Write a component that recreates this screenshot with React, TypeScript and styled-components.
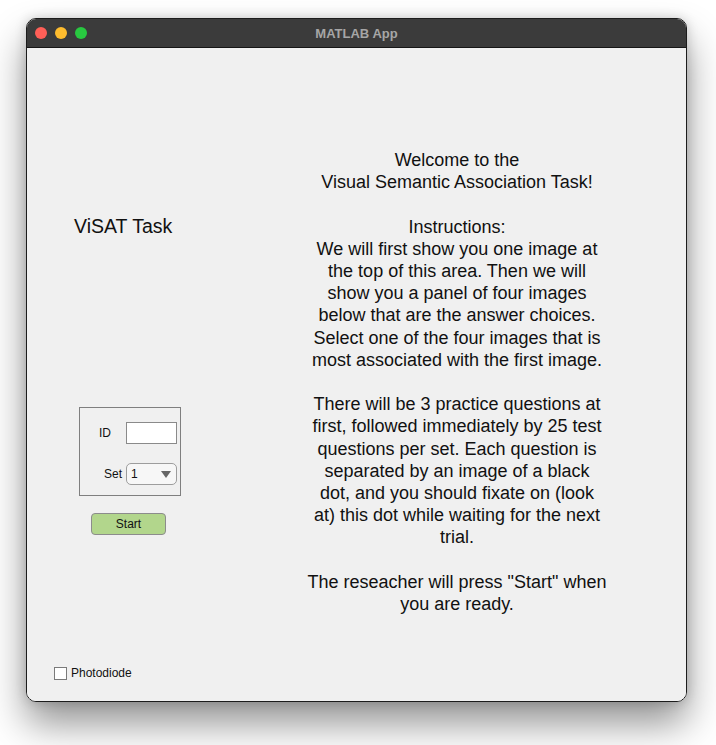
import React, { useState } from 'react';
import styled, { createGlobalStyle } from 'styled-components';

const GlobalStyle = createGlobalStyle`
  html, body {
    margin: 0;
    padding: 0;
    background: #ffffff;
    font-family: 'Liberation Sans', Arial, Helvetica, sans-serif;
  }
`;

const Desktop = styled.div`
  width: 716px;
  height: 745px;
  padding: 18px 0 0 26px;
  box-sizing: border-box;
  overflow: hidden;
`;

const Window = styled.div`
  width: 661px;
  height: 684px;
  border-radius: 10px;
  overflow: hidden;
  border: 1px solid #1c1c1c;
  box-sizing: border-box;
  display: flex;
  flex-direction: column;
  box-shadow: 0 22px 38px rgba(0, 0, 0, 0.42), 0 0 12px rgba(0, 0, 0, 0.18);
`;

const TitleBar = styled.div`
  height: 28px;
  flex-shrink: 0;
  background: #3b3b3b;
  border-bottom: 1px solid #161616;
  display: flex;
  align-items: center;
  position: relative;
  padding-left: 8px;
  gap: 8px;
`;

const Light = styled.span<{ $color: string }>`
  width: 12px;
  height: 12px;
  border-radius: 50%;
  background: ${(p) => p.$color};
`;

const WindowTitle = styled.div`
  position: absolute;
  left: 0;
  right: 0;
  text-align: center;
  font-size: 13px;
  font-weight: bold;
  color: #a6a6a6;
  pointer-events: none;
`;

const Content = styled.div`
  flex: 1;
  background: #f0f0f0;
  display: grid;
  grid-template-columns: 270px 320px;
`;

const LeftColumn = styled.div`
  display: flex;
  flex-direction: column;
  align-items: flex-start;
`;

const AppTitle = styled.div`
  margin: 166px 0 0 47px;
  font-size: 19.5px;
  line-height: 24px;
  color: #111;
`;

const Panel = styled.div`
  margin: 169px 0 0 52px;
  width: 102px;
  height: 89px;
  box-sizing: border-box;
  border: 1px solid #7f7f7f;
  padding: 14px 3px 0 0;
  display: grid;
  grid-template-columns: 1fr 51px;
  grid-auto-rows: 22px;
  column-gap: 4px;
  row-gap: 19px;
  align-items: center;
`;

const FieldLabel = styled.label<{ $inset?: number }>`
  font-size: 12px;
  color: #111;
  text-align: right;
  padding-right: ${(p) => p.$inset ?? 0}px;
`;

const TextField = styled.input`
  width: 51px;
  height: 22px;
  box-sizing: border-box;
  border: 1px solid #8a8a8a;
  background: #fff;
  padding: 0 3px;
  font-size: 12px;
  font-family: inherit;
  outline: none;
`;

const Select = styled.div`
  width: 51px;
  height: 22px;
  box-sizing: border-box;
  border: 1px solid #9d9d9d;
  border-radius: 5px;
  background: #f7f7f7;
  display: flex;
  align-items: center;
  justify-content: space-between;
  padding: 0 5px 0 4px;
  font-size: 12px;
  color: #111;
`;

const Caret = styled.span`
  width: 0;
  height: 0;
  border-left: 5px solid transparent;
  border-right: 5px solid transparent;
  border-top: 7px solid #666;
`;

const StartButton = styled.button`
  margin: 17px 0 0 64px;
  width: 75px;
  height: 22px;
  box-sizing: border-box;
  border: 1px solid #8c8c8c;
  border-radius: 4px;
  background: #b2d68c;
  font-family: inherit;
  font-size: 12px;
  color: #111;
  padding: 0;
`;

const CheckRow = styled.label`
  margin: auto 0 21px 27px;
  display: flex;
  align-items: center;
  gap: 4px;
  font-size: 12px;
  color: #111;
`;

const Box = styled.span`
  width: 13px;
  height: 13px;
  box-sizing: border-box;
  border: 1px solid #7a7a7a;
  background: #fff;
`;

const Instructions = styled.div`
  padding-top: 101px;
  text-align: center;
  font-size: 18px;
  line-height: 22.2px;
  color: #111;
  white-space: nowrap;
`;

const lines = [
  'Welcome to the',
  'Visual Semantic Association Task!',
  '',
  'Instructions:',
  'We will first show you one image at',
  'the top of this area. Then we will',
  'show you a panel of four images',
  'below that are the answer choices.',
  'Select one of the four images that is',
  'most associated with the first image.',
  '',
  'There will be 3 practice questions at',
  'first, followed immediately by 25 test',
  'questions per set. Each question is',
  'separated by an image of a black',
  'dot, and you should fixate on (look',
  'at) this dot while waiting for the next',
  'trial.',
  '',
  'The reseacher will press "Start" when',
  'you are ready.',
];

export default function App() {
  const [id, setId] = useState('');

  return (
    <>
      <GlobalStyle />
      <Desktop>
        <Window>
          <TitleBar>
            <Light $color="#ff5f57" />
            <Light $color="#febc2e" />
            <Light $color="#28c840" />
            <WindowTitle>MATLAB App</WindowTitle>
          </TitleBar>
          <Content>
            <LeftColumn>
              <AppTitle>ViSAT Task</AppTitle>
              <Panel>
                <FieldLabel $inset={11}>ID</FieldLabel>
                <TextField value={id} onChange={(e) => setId(e.target.value)} />
                <FieldLabel>Set</FieldLabel>
                <Select>
                  1
                  <Caret />
                </Select>
              </Panel>
              <StartButton>Start</StartButton>
              <CheckRow>
                <Box />
                Photodiode
              </CheckRow>
            </LeftColumn>
            <Instructions>
              {lines.map((line, i) => (
                <div key={i}>{line || '\u00a0'}</div>
              ))}
            </Instructions>
          </Content>
        </Window>
      </Desktop>
    </>
  );
}
